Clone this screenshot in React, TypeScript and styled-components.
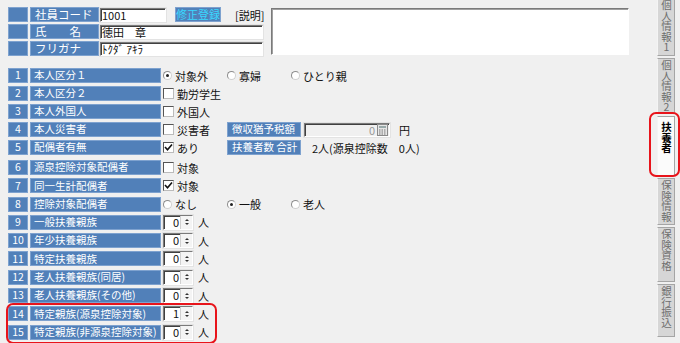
import styled, { createGlobalStyle } from 'styled-components';

const BLUE = '#5180b9';

const GlobalStyle = createGlobalStyle`
  html, body { margin: 0; padding: 0; background: #f0f0f0; }
  body {
    font-family: "Noto Sans CJK JP", "Noto Sans", sans-serif;
    font-size: 11px;
    color: #111;
  }
`;

type Mark = { kind: 'radio' | 'check'; on?: boolean; text: string; width?: number };

const dependents: { no: number; label: string; value: string }[] = [
  { no: 9, label: '一般扶養親族', value: '0' },
  { no: 10, label: '年少扶養親族', value: '0' },
  { no: 11, label: '特定扶養親族', value: '0' },
  { no: 12, label: '老人扶養親族(同居)', value: '0' },
  { no: 13, label: '老人扶養親族(その他)', value: '0' },
];

const specific = [
  { no: 14, label: '特定親族(源泉控除対象)', value: '1' },
  { no: 15, label: '特定親族(非源泉控除対象)', value: '0' },
];

const tabs = [
  { label: '個人情報1', h: 58 },
  { label: '個人情報2', h: 56 },
  { label: '扶養者', h: 60, active: true },
  { label: '保険情報', h: 47 },
  { label: '保険資格', h: 55 },
  { label: '銀行振込', h: 53 },
];

const Option = ({ kind, on, text, width = 62 }: Mark) => (
  <Opt $w={width}>
    {kind === 'radio' ? <Radio $on={!!on} /> : <Check>{on && <CheckTick />}</Check>}
    <span>{text}</span>
  </Opt>
);

const CheckTick = () => (
  <svg width="9" height="9" viewBox="0 0 9 9">
    <path d="M1 4 L3.5 6.8 L8 1.5" fill="none" stroke="#111" strokeWidth="1.6" />
  </svg>
);

const Calc = () => (
  <svg width="11" height="12" viewBox="0 0 11 12">
    <rect x="0.5" y="0.5" width="10" height="11" fill="#e6e6e6" stroke="#8a8a8a" />
    <rect x="2" y="2" width="7" height="2" fill="#9aa" />
    {[0, 1, 2].map((r) =>
      [0, 1, 2].map((c) => (
        <rect key={`${r}-${c}`} x={2 + c * 2.5} y={5.5 + r * 2} width="1.5" height="1" fill="#777" />
      ))
    )}
  </svg>
);

const Spinner = ({ value }: { value: string }) => (
  <Spin>
    <SpinValue>{value}</SpinValue>
    <SpinArrows>
      <Arrow $up />
      <Arrow />
    </SpinArrows>
  </Spin>
);

const App = () => (
  <Screen>
    <GlobalStyle />
    <Main>
      <Header>
        <HeaderFields>
          <HRow>
            <Num />
            <HLabel>社員コード</HLabel>
            <TextBox $w={66}>1001</TextBox>
            <EditButton>修正登録</EditButton>
            <Note>[説明]</Note>
          </HRow>
          <HRow>
            <Num />
            <HLabel>氏　　名</HLabel>
            <TextBox $w={163}>徳田　章</TextBox>
          </HRow>
          <HRow>
            <Num />
            <HLabel>フリガナ</HLabel>
            <TextBox $w={163}>ﾄｸﾀﾞ ｱｷﾗ</TextBox>
          </HRow>
        </HeaderFields>
        <Memo />
      </Header>

      <Group>
        <Row>
          <Num>1</Num>
          <Label>本人区分１</Label>
          <Option kind="radio" on text="対象外" />
          <Option kind="radio" text="寡婦" />
          <Option kind="radio" text="ひとり親" width={80} />
        </Row>
        <Row>
          <Num>2</Num>
          <Label>本人区分２</Label>
          <Option kind="check" text="勤労学生" />
        </Row>
        <Row>
          <Num>3</Num>
          <Label>本人外国人</Label>
          <Option kind="check" text="外国人" />
        </Row>
        <Row>
          <Num>4</Num>
          <Label>本人災害者</Label>
          <Option kind="check" text="災害者" />
          <SubLabel>徴収猶予税額</SubLabel>
          <AmountBox>
            <span>0</span>
            <Calc />
          </AmountBox>
          <Unit $gap={9}>円</Unit>
        </Row>
        <Row>
          <Num>5</Num>
          <Label>配偶者有無</Label>
          <Option kind="check" on text="あり" />
          <SubLabel>扶養者数 合計</SubLabel>
          <Unit $gap={11}>2人(源泉控除数　0人)</Unit>
        </Row>
      </Group>

      <Group $second>
        <Row>
          <Num>6</Num>
          <Label>源泉控除対象配偶者</Label>
          <Option kind="check" text="対象" />
        </Row>
        <Row>
          <Num>7</Num>
          <Label>同一生計配偶者</Label>
          <Option kind="check" on text="対象" />
        </Row>
        <Row>
          <Num>8</Num>
          <Label>控除対象配偶者</Label>
          <Option kind="radio" text="なし" />
          <Option kind="radio" on text="一般" />
          <Option kind="radio" text="老人" />
        </Row>
        {dependents.map((d) => (
          <Row key={d.no}>
            <Num>{d.no}</Num>
            <Label>{d.label}</Label>
            <Spinner value={d.value} />
            <Unit $gap={5}>人</Unit>
          </Row>
        ))}
        <Highlight>
          {specific.map((d) => (
            <Row key={d.no}>
              <Num>{d.no}</Num>
              <Label>{d.label}</Label>
              <Spinner value={d.value} />
              <Unit $gap={5}>人</Unit>
            </Row>
          ))}
        </Highlight>
      </Group>
    </Main>

    <Tabs>
      {tabs.map((t) => (
        <Tab key={t.label} $h={t.h} $active={!!t.active}>
          {t.label}
        </Tab>
      ))}
    </Tabs>
  </Screen>
);

export default App;

const Screen = styled.div`
  width: 680px;
  height: 343px;
  display: flex;
  overflow: hidden;
  background: #f0f0f0;
`;

const Main = styled.div`
  flex: 1;
  padding: 7px 0 0 8px;
  display: flex;
  flex-direction: column;
`;

const Header = styled.div`
  display: flex;
  align-items: flex-start;
  gap: 7px;
  margin-bottom: 12px;
`;

const HeaderFields = styled.div`
  display: flex;
  flex-direction: column;
  gap: 2px;
`;

const HRow = styled.div`
  display: flex;
  align-items: center;
  height: 15px;
  gap: 2px;
`;

const Cell = styled.div`
  height: 15px;
  box-sizing: border-box;
  background: ${BLUE};
  color: #fff;
  border: 1px solid #7ea2cf;
  display: flex;
  align-items: center;
  white-space: nowrap;
  line-height: 1;
  font-size: 10.5px;
  overflow: hidden;
`;

const Num = styled(Cell)`
  width: 20px;
  justify-content: center;
`;

const HLabel = styled(Cell)`
  width: 69px;
  padding-left: 4px;
  font-size: 11.5px;
  margin-right: -1px;
`;

const Label = styled(Cell)`
  width: 131px;
  padding-left: 3px;
`;

const SubLabel = styled(Cell)`
  width: 74px;
  padding-left: 4px;
`;

const Sunken = styled.div`
  box-sizing: border-box;
  background: #fff;
  border-top: 1px solid #7a7a7a;
  border-left: 1px solid #7a7a7a;
  border-bottom: 1px solid #fff;
  border-right: 1px solid #fff;
  box-shadow: inset 1px 1px 0 #404040, 0 0 0 1px #e3e3e3;
`;

const TextBox = styled(Sunken)<{ $w: number }>`
  width: ${({ $w }) => $w}px;
  height: 14px;
  padding-left: 1px;
  line-height: 12px;
  font-size: 11px;
  white-space: nowrap;
  overflow: hidden;
`;

const EditButton = styled.div`
  margin-left: 7px;
  width: 46px;
  height: 15px;
  background: ${BLUE};
  color: #39d8ff;
  font-size: 11px;
  line-height: 13px;
  text-align: center;
  border: 1px solid #7ea2cf;
  box-sizing: border-box;
`;

const Note = styled.span`
  margin-left: 12px;
  font-size: 11px;
`;

const Memo = styled(Sunken)`
  width: 358px;
  height: 47px;
  margin-top: 1px;
  box-shadow: inset 1px 1px 0 #a0a0a0;
`;

const Group = styled.div<{ $second?: boolean }>`
  display: flex;
  flex-direction: column;
  gap: ${({ $second }) => ($second ? '3.3px' : '3px')};
  margin-top: ${({ $second }) => ($second ? '5px' : '0')};
`;

const Row = styled.div`
  display: flex;
  align-items: center;
  height: 15px;
  gap: 2px;
`;

const Highlight = styled.div`
  position: relative;
  display: flex;
  flex-direction: column;
  gap: 3.3px;

  &::after {
    content: '';
    position: absolute;
    left: -2px;
    top: -3px;
    width: 211px;
    bottom: -4px;
    border: 2px solid #e8141b;
    border-radius: 7px;
    box-sizing: border-box;
    pointer-events: none;
  }
`;

const Opt = styled.div<{ $w: number }>`
  width: ${({ $w }) => $w}px;
  display: flex;
  align-items: center;
  gap: 3px;
  white-space: nowrap;
  font-size: 11px;
`;

const Radio = styled.span<{ $on: boolean }>`
  width: 9px;
  height: 9px;
  border-radius: 50%;
  box-sizing: border-box;
  border: 1px solid #8d8d8d;
  border-right-color: #d0d0d0;
  border-bottom-color: #d0d0d0;
  background: #fff;
  display: flex;
  align-items: center;
  justify-content: center;

  &::after {
    content: '';
    width: 3px;
    height: 3px;
    border-radius: 50%;
    background: ${({ $on }) => ($on ? '#222' : 'transparent')};
  }
`;

const Check = styled.span`
  width: 11px;
  height: 11px;
  box-sizing: border-box;
  border: 1px solid #555;
  border-right-color: #bbb;
  border-bottom-color: #bbb;
  background: #fff;
  display: flex;
  align-items: center;
  justify-content: center;
`;

const AmountBox = styled(Sunken)`
  width: 86px;
  height: 14px;
  background: #f0f0f0;
  display: flex;
  align-items: center;
  justify-content: flex-end;
  gap: 2px;
  padding-right: 1px;
  color: #999;
  font-size: 11px;
  margin-left: 1px;
`;

const Unit = styled.span<{ $gap: number }>`
  margin-left: ${({ $gap }) => $gap - 2}px;
  white-space: nowrap;
  font-size: 11px;
`;

const Spin = styled(Sunken)`
  width: 30px;
  height: 15px;
  display: flex;
  align-items: stretch;
`;

const SpinValue = styled.span`
  flex: 1;
  text-align: right;
  padding-right: 1px;
  line-height: 13px;
  font-size: 11px;
`;

const SpinArrows = styled.span`
  width: 11px;
  display: flex;
  flex-direction: column;
  justify-content: center;
  align-items: center;
  gap: 2px;
  background: #f4f4f4;
  border-left: 1px solid #d0d0d0;
`;

const Arrow = styled.span<{ $up?: boolean }>`
  width: 0;
  height: 0;
  border-left: 2px solid transparent;
  border-right: 2px solid transparent;
  ${({ $up }) => ($up ? 'border-bottom: 2px solid #333;' : 'border-top: 2px solid #333;')}
`;

const Tabs = styled.div`
  width: 18px;
  margin: -2px 5px 0 0;
  display: flex;
  flex-direction: column;
  gap: 2px;
`;

const Tab = styled.div<{ $h: number; $active: boolean }>`
  position: relative;
  height: ${({ $h }) => $h}px;
  flex-shrink: 0;
  box-sizing: border-box;
  background: ${({ $active }) => ($active ? '#fbfbfb' : '#d6d6d6')};
  border: 1px solid #a5a5a5;
  border-left-color: #f4f4f4;
  color: ${({ $active }) => ($active ? '#000' : '#6e6e6e')};
  font-weight: ${({ $active }) => ($active ? 700 : 400)};
  writing-mode: vertical-rl;
  text-orientation: upright;
  white-space: nowrap;
  font-size: 10.5px;
  line-height: 16px;
  padding-top: ${({ $active }) => ($active ? 5 : 1)}px;

  ${({ $active }) =>
    $active &&
    `
    &::after {
      content: '';
      position: absolute;
      left: -9px;
      right: -6px;
      top: -5px;
      bottom: -2px;
      border: 2px solid #e8141b;
      border-radius: 7px;
      pointer-events: none;
    }
  `}
`;
